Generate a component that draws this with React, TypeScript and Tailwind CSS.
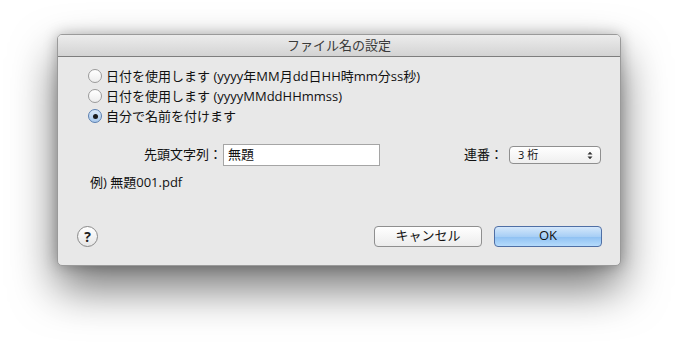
import React from "react";

const font = { fontFamily: '"Open Sans", "Noto Sans CJK JP", sans-serif' };

function Radio({ checked, label }: { checked?: boolean; label: string }) {
  return (
    <div className="flex items-center h-[20px]">
      <div
        className={
          "w-[14px] h-[14px] rounded-full border flex items-center justify-center " +
          (checked
            ? "border-[#5a7fb0] bg-[linear-gradient(#dbe9f8,#a9c9ec)]"
            : "border-[#9a9a9a] bg-[linear-gradient(#ffffff,#ededed)]")
        }
      >
        {checked && <div className="w-[5px] h-[5px] rounded-full bg-[#1b1b1b]" />}
      </div>
      <span className="ml-[4px] text-[13px] text-[#111] leading-none">{label}</span>
    </div>
  );
}

export default function App() {
  return (
    <div className="w-[678px] h-[345px] bg-white overflow-hidden" style={font}>
      <div className="pt-[34px] pl-[57px]">
        <div className="w-[564px] h-[232px] rounded-[5px] bg-[#e8e8e8] border border-[#9a9a9a] shadow-[0_22px_45px_rgba(0,0,0,0.55),0_0_14px_rgba(0,0,0,0.25)] flex flex-col overflow-hidden">
          <div className="h-[22px] shrink-0 bg-[linear-gradient(#ececec,#d3d3d3)] border-b border-[#7d7d7d] flex items-center justify-center text-[13px] text-[#3a3a3a]">
            ファイル名の設定
          </div>
          <div className="flex flex-col pl-[30px] pt-[9px]">
            <Radio label="日付を使用します (yyyy年MM月dd日HH時mm分ss秒)" />
            <Radio label="日付を使用します (yyyyMMddHHmmss)" />
            <Radio checked label="自分で名前を付けます" />
          </div>
          <div className="flex items-center mt-[18px] h-[22px] text-[13px] text-[#111]">
            <span className="ml-[64px] w-[100px] text-right">先頭文字列：</span>
            <div className="ml-[1px] w-[157px] h-[22px] bg-white border border-[#a5a5a5] flex items-center pl-[4px]">
              無題
            </div>
            <span className="w-[123px] text-right">連番：</span>
            <div className="ml-[6px] w-[92px] h-[18px] rounded-[4px] border border-[#8f8f8f] bg-[linear-gradient(#ffffff,#efefef)] flex items-center text-[11px] pl-[8px] pr-[7px]">
              <span className="flex-1">3 桁</span>
              <svg width="6" height="9" viewBox="0 0 6 9">
                <path d="M0.5 3.5 L3 0.8 L5.5 3.5 Z M0.5 5.5 L3 8.2 L5.5 5.5 Z" fill="#333" />
              </svg>
            </div>
          </div>
          <div className="ml-[32px] mt-[10px] text-[13px] text-[#111] leading-none">例) 無題001.pdf</div>
          <div className="flex items-center mt-[36px] h-[22px]">
            <div className="ml-[19px] w-[21px] h-[21px] rounded-full border border-[#8a8a8a] bg-[linear-gradient(#ffffff,#e6e6e6)] flex items-center justify-center text-[14px] font-bold text-[#222]">
              ?
            </div>
            <div className="ml-[276px] w-[108px] h-[21px] rounded-[4px] border border-[#8f8f8f] bg-[linear-gradient(#ffffff,#ececec)] flex items-center justify-center text-[13px] text-[#111]">
              キャンセル
            </div>
            <div className="ml-[12px] w-[108px] h-[21px] rounded-[4px] border border-[#4f6fa5] bg-[linear-gradient(#d4e7fb_0%,#a8cff5_50%,#8ec0f2_51%,#b5dbfc_100%)] flex items-center justify-center text-[13px] text-[#111]">
              OK
            </div>
          </div>
        </div>
      </div>
    </div>
  );
}
